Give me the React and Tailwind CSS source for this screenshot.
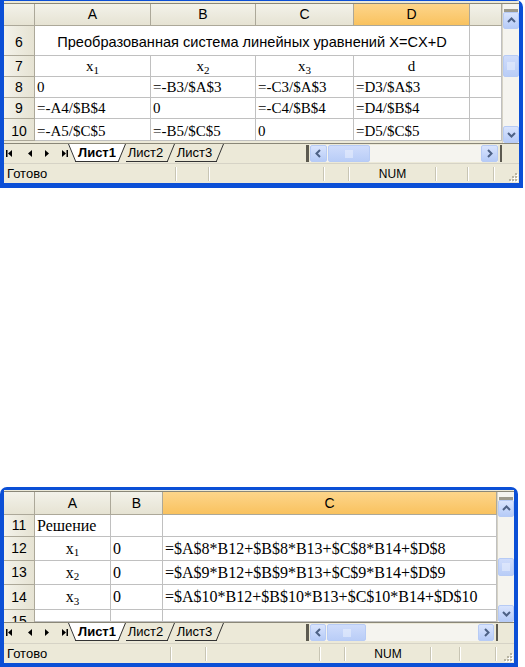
import React from "react";

const SANS = "font-['Liberation_Sans',Arial,sans-serif]";
const SERIF = "font-['Liberation_Serif','Times_New_Roman',serif]";

function ColHdr({ w, label, sel }) {
  return (
    <div
      className={`${w} h-full shrink-0 flex items-center justify-center border-r border-b border-[#aca899] ${
        sel ? "bg-gradient-to-b from-[#fdd58a] to-[#f9c25e]" : "bg-gradient-to-b from-[#f3f2ea] to-[#e6e3d3]"
      } ${SANS} text-[14px] text-black`}
    >
      {label}
    </div>
  );
}

function RowHdr({ h, label, cls = "items-center" }) {
  return (
    <div
      className={`w-[31px] ${h} shrink-0 flex ${cls} justify-center border-r border-b border-[#aca899] bg-gradient-to-r from-[#f3f2ea] to-[#e6e3d3] ${SANS} text-[14px] text-black`}
    >
      {label}
    </div>
  );
}

function Cell({ w, children, center, cls = "" }) {
  return (
    <div
      className={`${w} h-full shrink-0 flex items-center ${center ? "justify-center" : "justify-start pl-[2px]"} border-r border-b border-[#c0c0c0] bg-white ${SERIF} text-black whitespace-nowrap overflow-visible ${cls}`}
    >
      {children}
    </div>
  );
}

function X({ n }) {
  return (
    <span>
      x<sub className="text-[11px]">{n}</sub>
    </span>
  );
}

function Chevron({ dir }) {
  const pts = {
    up: "2,7 5.5,3.5 9,7",
    down: "2,4 5.5,7.5 9,4",
    left: "7,2 3.5,5.5 7,9",
    right: "4,2 7.5,5.5 4,9",
  }[dir];
  return (
    <svg width="11" height="11" viewBox="0 0 11 11">
      <polyline points={pts} fill="none" stroke="#4d6185" strokeWidth="2" />
    </svg>
  );
}

function SBtn({ dir, cls }) {
  return (
    <div
      className={`${cls} shrink-0 flex items-center justify-center rounded-[2px] border border-[#b7cbf5] bg-gradient-to-b from-[#d9e4fd] to-[#b6cbf7]`}
    >
      <Chevron dir={dir} />
    </div>
  );
}

function Thumb({ cls, vertical }) {
  return (
    <div
      className={`${cls} shrink-0 flex items-center justify-center rounded-[2px] border border-[#b7cbf5] bg-gradient-to-b from-[#cfdcfb] to-[#b9cdf7]`}
    >
      {vertical ? (
        <svg width="8" height="8" viewBox="0 0 8 8">
          <line x1="0" y1="1" x2="8" y2="1" stroke="#eef3fe" />
          <line x1="0" y1="3" x2="8" y2="3" stroke="#eef3fe" />
          <line x1="0" y1="5" x2="8" y2="5" stroke="#eef3fe" />
          <line x1="0" y1="7" x2="8" y2="7" stroke="#eef3fe" />
        </svg>
      ) : (
        <svg width="8" height="8" viewBox="0 0 8 8">
          <line x1="1" y1="0" x2="1" y2="8" stroke="#eef3fe" />
          <line x1="3" y1="0" x2="3" y2="8" stroke="#eef3fe" />
          <line x1="5" y1="0" x2="5" y2="8" stroke="#eef3fe" />
          <line x1="7" y1="0" x2="7" y2="8" stroke="#eef3fe" />
        </svg>
      )}
    </div>
  );
}

function NavButtons() {
  return (
    <div className="w-[64px] shrink-0 flex items-center h-full">
      <svg width="64" height="20" viewBox="0 0 64 20">
        <rect x="2" y="6" width="1.5" height="7" fill="#000" />
        <polygon points="8,6 8,13 4,9.5" fill="#000" />
        <polygon points="28,6 28,13 24,9.5" fill="#000" />
        <polygon points="41,6 41,13 45,9.5" fill="#000" />
        <polygon points="58,6 58,13 62,9.5" fill="#000" />
        <rect x="62.5" y="6" width="1.5" height="7" fill="#000" />
      </svg>
    </div>
  );
}

function SlantL({ fill }) {
  return (
    <svg width="10" height="18" viewBox="0 0 10 18" className="shrink-0">
      {fill && <polygon points="0,0 10,0 10,17 7,17" fill="#fff" />}
      <line x1="0.5" y1="0" x2="7.5" y2="17" stroke="#333" />
      <line x1="7" y1="17.5" x2="10" y2="17.5" stroke="#333" />
    </svg>
  );
}

function SlantR({ fill }) {
  return (
    <svg width="10" height="18" viewBox="0 0 10 18" className="shrink-0">
      {fill && <polygon points="0,0 9,0 2,17 0,17" fill="#fff" />}
      <line x1="2.5" y1="17" x2="9.5" y2="0" stroke="#333" />
      <line x1="0" y1="17.5" x2="3" y2="17.5" stroke="#333" />
    </svg>
  );
}

function Tabs() {
  return (
    <div className={`flex items-start h-full ${SANS} text-[13px] text-black`}>
      <SlantL fill />
      <div className="h-[18px] w-[38px] bg-white border-b border-[#333] flex items-center justify-center font-bold">
        Лист1
      </div>
      <SlantR fill />
      <div className="h-[18px] w-[39px] border-b border-[#333] flex items-center justify-center">Лист2</div>
      <SlantR />
      <div className="h-[18px] w-[39px] border-b border-[#333] flex items-center justify-center">Лист3</div>
      <SlantR />
    </div>
  );
}

function Grip() {
  return (
    <svg width="12" height="12" viewBox="0 0 12 12">
      {[
        [9, 3],
        [9, 6],
        [6, 6],
        [9, 9],
        [6, 9],
        [3, 9],
      ].map(([x, y], i) => (
        <g key={i}>
          <rect x={x} y={y} width="2" height="2" fill="#fff" />
          <rect x={x - 1} y={y - 1} width="2" height="2" fill="#b8b4a2" />
        </g>
      ))}
    </svg>
  );
}

function Sep() {
  return <div className="w-[2px] h-[14px] shrink-0 border-l border-r border-l-[#c8c5b4] border-r-white" />;
}

function Window1() {
  const rowCls = "flex shrink-0";
  return (
    <div className="w-[523px] h-[188px] bg-[#0b4fd6] pl-[4px] pr-[4px] pb-[5px] pt-[1px] rounded-tr-[7px]">
      <div className="bg-[#ece9d8] h-full flex flex-col">
        <div className="h-[3px] shrink-0 border-b border-[#8a8778]" />
        <div className="flex h-[139px] shrink-0">
          <div className="w-[498px] flex flex-col shrink-0 overflow-hidden">
            <div className={`${rowCls} h-[22px]`}>
              <div className="w-[31px] h-full shrink-0 border-r border-b border-[#aca899] bg-gradient-to-b from-[#f3f2ea] to-[#e6e3d3]" />
              <ColHdr w="w-[116px]" label="A" />
              <ColHdr w="w-[105px]" label="B" />
              <ColHdr w="w-[98px]" label="C" />
              <ColHdr w="w-[116px]" label="D" sel />
              <ColHdr w="w-[32px]" label="" />
            </div>
            <div className={`${rowCls} h-[30px]`}>
              <RowHdr h="h-full" label="6" cls="items-end pb-[2px]" />
              <div
                className={`w-[435px] h-full shrink-0 flex items-end justify-center pb-[1px] border-r border-b border-[#c0c0c0] bg-white ${SANS} text-[14.6px] text-black whitespace-nowrap`}
              >
                Преобразованная система линейных уравнений X=CX+D
              </div>
              <Cell w="w-[32px]" />
            </div>
            <div className={`${rowCls} h-[21px] text-[15px]`}>
              <RowHdr h="h-full" label="7" />
              <Cell w="w-[116px]" center>
                <X n="1" />
              </Cell>
              <Cell w="w-[105px]" center>
                <X n="2" />
              </Cell>
              <Cell w="w-[98px]" center>
                <X n="3" />
              </Cell>
              <Cell w="w-[116px]" center>
                d
              </Cell>
              <Cell w="w-[32px]" />
            </div>
            <div className={`${rowCls} h-[21px] text-[15px]`}>
              <RowHdr h="h-full" label="8" />
              <Cell w="w-[116px]">0</Cell>
              <Cell w="w-[105px]">=-B3/$A$3</Cell>
              <Cell w="w-[98px]">=-C3/$A$3</Cell>
              <Cell w="w-[116px]">=D3/$A$3</Cell>
              <Cell w="w-[32px]" />
            </div>
            <div className={`${rowCls} h-[21px] text-[15px]`}>
              <RowHdr h="h-full" label="9" />
              <Cell w="w-[116px]">=-A4/$B$4</Cell>
              <Cell w="w-[105px]">0</Cell>
              <Cell w="w-[98px]">=-C4/$B$4</Cell>
              <Cell w="w-[116px]">=D4/$B$4</Cell>
              <Cell w="w-[32px]" />
            </div>
            <div className={`${rowCls} h-[22px] text-[15px]`}>
              <RowHdr h="h-full" label="10" cls="items-start pt-[2px]" />
              <Cell w="w-[116px]" cls="!items-start pt-[1px]">=-A5/$C$5</Cell>
              <Cell w="w-[105px]" cls="!items-start pt-[1px]">=-B5/$C$5</Cell>
              <Cell w="w-[98px]" cls="!items-start pt-[1px]">0</Cell>
              <Cell w="w-[116px]" cls="!items-start pt-[1px]">=D5/$C$5</Cell>
              <Cell w="w-[32px]" />
            </div>
          </div>
          <div className="w-[17px] shrink-0 flex flex-col bg-[#f5f4ef] border-l border-[#d6d3c6]">
            <div className="h-[8px] shrink-0 border-b-[3px] border-[#9d9a8c] mx-[1px]" />
            <SBtn dir="up" cls="h-[17px] mx-[0px]" />
            <div className="h-[26px] shrink-0" />
            <Thumb vertical cls="h-[22px]" />
            <div className="flex-1" />
            <SBtn dir="down" cls="h-[17px]" />
          </div>
        </div>
        <div className="h-[20px] shrink-0 flex items-start border-t border-[#8a8778]">
          <NavButtons />
          <Tabs />
          <div className="flex-1" />
          <div className="w-[3px] h-[17px] mt-[1px] shrink-0 bg-[#5c5a50] mr-[1px]" />
          <div className="w-[188px] h-[17px] mt-[1px] shrink-0 flex bg-[#f5f4ef]">
            <SBtn dir="left" cls="w-[17px] h-full" />
            <div className="w-[1px] shrink-0" />
            <Thumb cls="w-[42px] h-full" />
            <div className="flex-1" />
            <SBtn dir="right" cls="w-[17px] h-full" />
          </div>
          <div className="w-[2px] h-[17px] mt-[1px] ml-[2px] shrink-0 bg-[#5c5a50]" />
          <div className="w-[17px] shrink-0" />
        </div>
        <div className={`h-[20px] shrink-0 flex items-center ${SANS} text-[13px] text-black border-t border-[#d6d3c6]`}>
          <div className="w-[171px] shrink-0 pl-[3px]">Готово</div>
          <Sep />
          <div className="w-[31px] shrink-0" />
          <Sep />
          <div className="w-[113px] shrink-0" />
          <Sep />
          <div className="w-[23px] shrink-0" />
          <Sep />
          <div className="w-[85px] shrink-0 text-center text-[12px]">NUM</div>
          <Sep />
          <div className="w-[30px] shrink-0" />
          <Sep />
          <div className="w-[24px] shrink-0" />
          <Sep />
          <div className="flex-1 flex justify-end items-end h-full">
            <Grip />
          </div>
        </div>
      </div>
    </div>
  );
}

function Window2() {
  const rowCls = "flex shrink-0";
  return (
    <div className="w-[518px] h-[180px] bg-[#0b4fd6] pl-[4px] pr-[4px] pt-[3px] pb-[4px] rounded-t-[7px]">
      <div className="bg-[#ece9d8] h-full flex flex-col">
        <div className="h-[2px] shrink-0 border-b border-[#8a8778]" />
        <div className="flex h-[130px] shrink-0">
          <div className="w-[493px] flex flex-col shrink-0 overflow-hidden">
            <div className={`${rowCls} h-[23px]`}>
              <div className="w-[31px] h-full shrink-0 border-r border-b border-[#aca899] bg-gradient-to-b from-[#f3f2ea] to-[#e6e3d3]" />
              <ColHdr w="w-[76px]" label="A" />
              <ColHdr w="w-[52px]" label="B" />
              <ColHdr w="w-[334px]" label="C" sel />
            </div>
            <div className={`${rowCls} h-[22px] text-[16px]`}>
              <RowHdr h="h-full" label="11" />
              <Cell w="w-[76px]">Решение</Cell>
              <Cell w="w-[52px]" />
              <Cell w="w-[334px]" />
            </div>
            <div className={`${rowCls} h-[24px] text-[16px]`}>
              <RowHdr h="h-full" label="12" />
              <Cell w="w-[76px]" center>
                <X n="1" />
              </Cell>
              <Cell w="w-[52px]">0</Cell>
              <Cell w="w-[334px]">=$A$8*B12+$B$8*B13+$C$8*B14+$D$8</Cell>
            </div>
            <div className={`${rowCls} h-[24px] text-[16px]`}>
              <RowHdr h="h-full" label="13" />
              <Cell w="w-[76px]" center>
                <X n="2" />
              </Cell>
              <Cell w="w-[52px]">0</Cell>
              <Cell w="w-[334px]">=$A$9*B12+$B$9*B13+$C$9*B14+$D$9</Cell>
            </div>
            <div className={`${rowCls} h-[25px] text-[16px]`}>
              <RowHdr h="h-full" label="14" />
              <Cell w="w-[76px]" center>
                <X n="3" />
              </Cell>
              <Cell w="w-[52px]">0</Cell>
              <Cell w="w-[334px]">=$A$10*B12+$B$10*B13+$C$10*B14+$D$10</Cell>
            </div>
            <div className={`${rowCls} h-[12px] text-[16px] overflow-hidden`}>
              <RowHdr h="h-[24px]" label="15" />
              <Cell w="w-[76px]" />
              <Cell w="w-[52px]" />
              <Cell w="w-[334px]" />
            </div>
          </div>
          <div className="w-[17px] shrink-0 flex flex-col bg-[#f5f4ef] border-l border-[#d6d3c6]">
            <div className="h-[8px] shrink-0 border-b-[3px] border-[#9d9a8c] mx-[1px]" />
            <SBtn dir="up" cls="h-[17px]" />
            <div className="h-[41px] shrink-0" />
            <Thumb vertical cls="h-[18px]" />
            <div className="flex-1" />
            <SBtn dir="down" cls="h-[17px]" />
          </div>
        </div>
        <div className="h-[21px] shrink-0 flex items-start border-t border-[#8a8778]">
          <NavButtons />
          <Tabs />
          <div className="flex-1" />
          <div className="w-[3px] h-[17px] mt-[1px] shrink-0 bg-[#5c5a50] mr-[1px]" />
          <div className="w-[184px] h-[17px] mt-[1px] shrink-0 flex bg-[#f5f4ef]">
            <SBtn dir="left" cls="w-[16px] h-full" />
            <div className="w-[1px] shrink-0" />
            <Thumb cls="w-[39px] h-full" />
            <div className="flex-1" />
            <SBtn dir="right" cls="w-[16px] h-full" />
          </div>
          <div className="w-[2px] h-[17px] mt-[1px] ml-[2px] shrink-0 bg-[#5c5a50]" />
          <div className="w-[16px] shrink-0" />
        </div>
        <div className={`h-[20px] shrink-0 flex items-center ${SANS} text-[13px] text-black border-t border-[#d6d3c6]`}>
          <div className="w-[166px] shrink-0 pl-[3px]">Готово</div>
          <Sep />
          <div className="w-[33px] shrink-0" />
          <Sep />
          <div className="w-[112px] shrink-0" />
          <Sep />
          <div className="w-[23px] shrink-0" />
          <Sep />
          <div className="w-[84px] shrink-0 text-center text-[12px]">NUM</div>
          <Sep />
          <div className="w-[27px] shrink-0" />
          <Sep />
          <div className="w-[34px] shrink-0" />
          <Sep />
          <div className="flex-1 flex justify-end items-end h-full">
            <Grip />
          </div>
        </div>
      </div>
    </div>
  );
}

export default function App() {
  return (
    <div className="w-[525px] h-[667px] bg-white overflow-hidden flex flex-col">
      <Window1 />
      <div className="h-[299px] shrink-0" />
      <Window2 />
    </div>
  );
}
